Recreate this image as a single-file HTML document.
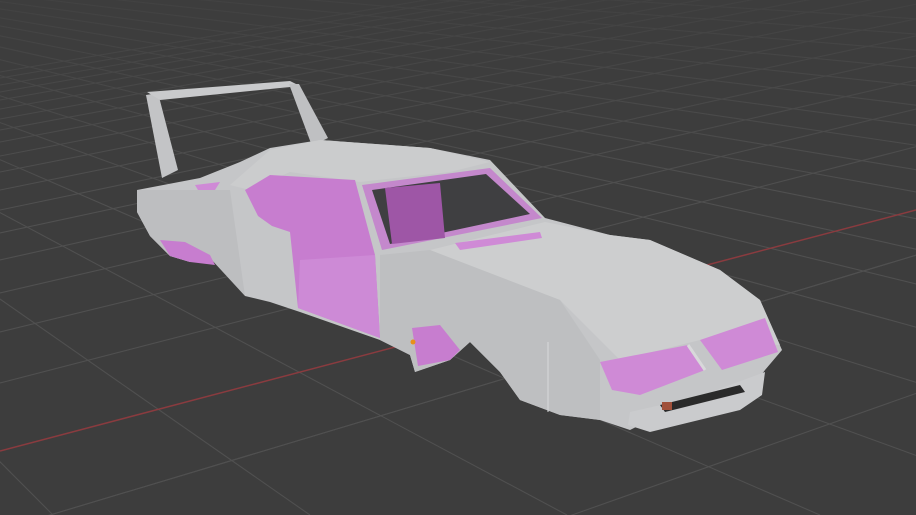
<!DOCTYPE html>
<html><head><style>
html,body{margin:0;padding:0;background:#3d3d3d;width:916px;height:515px;overflow:hidden}
svg{display:block;position:absolute;left:0;top:0}
</style></head><body>
<svg width="916" height="515" viewBox="0 0 916 515" xmlns="http://www.w3.org/2000/svg">
<defs>
<linearGradient id="fade" x1="0" y1="0" x2="0" y2="1">
<stop offset="0" stop-color="#3d3d3d" stop-opacity="0.75"/>
<stop offset="1" stop-color="#3d3d3d" stop-opacity="0"/>
</linearGradient>
</defs>
<rect width="916" height="515" fill="#3d3d3d"/>
<g stroke="#505050" stroke-width="1.1" fill="none">
<line x1="3500" y1="-520" x2="0" y2="530"/>
<line x1="3500" y1="-520" x2="0" y2="383"/>
<line x1="3500" y1="-520" x2="0" y2="332"/>
<line x1="3500" y1="-520" x2="0" y2="293"/>
<line x1="3500" y1="-520" x2="0" y2="260"/>
<line x1="3500" y1="-520" x2="0" y2="233"/>
<line x1="3500" y1="-520" x2="0" y2="210"/>
<line x1="3500" y1="-520" x2="0" y2="190"/>
<line x1="3500" y1="-520" x2="0" y2="172"/>
<line x1="3500" y1="-520" x2="0" y2="156"/>
<line x1="3500" y1="-520" x2="0" y2="142"/>
<line x1="3500" y1="-520" x2="0" y2="130"/>
<line x1="3500" y1="-520" x2="0" y2="119"/>
<line x1="3500" y1="-520" x2="0" y2="109"/>
<line x1="3500" y1="-520" x2="0" y2="100"/>
<line x1="3500" y1="-520" x2="0" y2="92"/>
<line x1="3500" y1="-520" x2="0" y2="85"/>
<line x1="3500" y1="-520" x2="0" y2="78"/>
<line x1="3500" y1="-520" x2="0" y2="72"/>
<line x1="3500" y1="-520" x2="-800" y2="770"/>
<line x1="3500" y1="-520" x2="-800" y2="1000"/>
<line x1="-530" y1="-70" x2="-200" y2="515"/>
<line x1="-530" y1="-70" x2="53" y2="515"/>
<line x1="-530" y1="-70" x2="310" y2="515"/>
<line x1="-530" y1="-70" x2="567" y2="515"/>
<line x1="-530" y1="-70" x2="820" y2="515"/>
<line x1="-530" y1="-70" x2="1080" y2="515"/>
<line x1="-530" y1="-70" x2="1340" y2="515"/>
<line x1="-530" y1="-70" x2="1600" y2="515"/>
<line x1="-530" y1="-70" x2="1860" y2="515"/>
<line x1="-530" y1="-70" x2="2120" y2="515"/>
<line x1="-530" y1="-70" x2="2400" y2="515"/>
<line x1="-530" y1="-70" x2="2700" y2="515"/>
<line x1="-530" y1="-70" x2="3000" y2="515"/>
<line x1="-530" y1="-70" x2="3400" y2="515"/>
<line x1="-530" y1="-70" x2="3800" y2="515"/>
<line x1="-530" y1="-70" x2="4300" y2="515"/>
<line x1="-530" y1="-70" x2="4900" y2="515"/>
<line x1="-530" y1="-70" x2="5600" y2="515"/>
<line x1="-530" y1="-70" x2="6500" y2="515"/>
<line x1="-530" y1="-70" x2="7600" y2="515"/>
<line x1="-530" y1="-70" x2="9000" y2="515"/>
</g>
<rect x="0" y="0" width="916" height="200" fill="url(#fade)"/>
<line x1="0" y1="451" x2="916" y2="210" stroke="#8a3b3f" stroke-width="1.5"/>
<polygon points="146,95 158,93 178,170 162,178" fill="#c3c4c6"/>
<polygon points="147,92 290,81 300,86 160,100" fill="#c9cacc"/>
<polygon points="289,84 299,84 328,138 312,146" fill="#bfc0c2"/>
<polygon points="137,190 200,178 240,162 270,148 320,140 430,148 490,160 545,218 610,235 650,240 720,270 760,300 782,350 765,370 750,390 720,400 680,410 650,420 630,430 600,420 560,415 520,400 500,372 470,342 450,360 415,372 410,355 380,340 300,312 270,302 245,296 235,272 210,258 190,262 170,256 150,236 137,212" fill="#c5c6c8"/>
<polygon points="230,185 270,150 320,140 430,148 490,162 450,172 360,182 290,172 250,190" fill="#cbcccd"/>
<polygon points="430,250 545,222 610,235 650,240 720,270 760,300 780,345 700,340 620,360 560,300 480,270" fill="#cdcecf"/>
<polygon points="137,190 230,190 245,296 210,258 190,262 170,256 150,236 137,212" fill="#bdbec0"/>
<polygon points="380,255 430,250 560,300 600,360 600,420 560,415 520,400 500,372 470,342 450,360 415,372 410,355 380,340" fill="#bebfc1"/>
<polygon points="245,190 270,175 355,180 375,255 380,338 298,308 290,232 272,226 258,216" fill="#c77dcf"/>
<polygon points="300,260 375,255 380,338 298,308" fill="#cd8ad6"/>
<polygon points="362,185 490,168 542,218 382,250" fill="#c488cc"/>
<polygon points="372,190 486,174 530,214 390,244" fill="#3f3f41"/>
<polygon points="385,188 440,183 445,238 392,244" fill="#9e56a6"/>
<polygon points="455,243 540,232 542,238 460,250" fill="#cf8ad6"/>
<polygon points="160,240 185,242 210,255 215,265 190,262 170,256" fill="#c77dcf"/>
<polygon points="195,185 220,182 215,190 198,190" fill="#cf8ad6"/>
<polygon points="412,328 440,325 460,350 450,360 418,366" fill="#c77dcf"/>
<circle cx="413" cy="342" r="2.5" fill="#e8901a"/>
<polygon points="600,362 688,345 705,370 640,395 612,390" fill="#cf8ad6"/>
<polygon points="700,340 765,318 778,352 722,370" fill="#cf8ad6"/>
<line x1="688" y1="345" x2="705" y2="370" stroke="#d8d8da" stroke-width="3"/>
<polygon points="630,412 700,396 765,372 762,395 740,410 650,432 628,425" fill="#cacbcd"/>
<polygon points="660,405 740,385 745,392 665,412" fill="#2a2a2a"/>
<rect x="662" y="402" width="10" height="8" fill="#a0503a"/>
<line x1="548" y1="342" x2="548" y2="412" stroke="#d8d9da" stroke-width="1"/>
</svg>
</body></html>
